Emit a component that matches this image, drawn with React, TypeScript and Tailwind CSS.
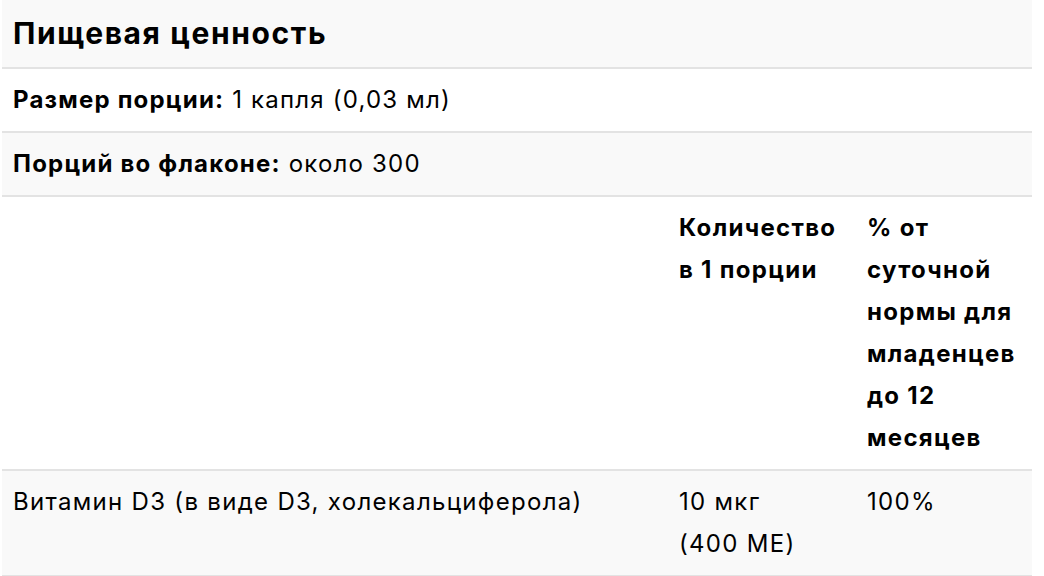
import React from 'react';

const rows = [
    { label: 'Размер порции:', value: '1 капля (0,03 мл)' },
    { label: 'Порций во флаконе:', value: 'около 300' },
];

const App: React.FC = () => {
    return (
        <main className="min-h-screen bg-white text-black font-['Inter',sans-serif]">
            <div className="ml-[2px] w-[1030px]">
                {/* Title */}
                <div className="bg-[#f9f9f9] border-b-2 border-[#e3e3e3] px-[11px] py-[10px]">
                    <h2 className="text-[30px] leading-[47px] font-bold tracking-[1.6px]">Пищевая ценность</h2>
                </div>

                {/* Serving info */}
                {rows.map((row, i) => (
                    <div
                        key={row.label}
                        className={`border-b-2 border-[#e3e3e3] px-[11px] py-[10px] text-[24px] leading-[42px] tracking-[1.2px] ${i % 2 === 1 ? 'bg-[#f9f9f9]' : 'bg-white'}`}
                    >
                        <span className="font-bold">{row.label}</span> {row.value}
                    </div>
                ))}

                {/* Nutrients table */}
                <table className="w-full border-collapse text-[24px] leading-[42px] tracking-[1.3px]">
                    <colgroup>
                        <col className="w-[666px]" />
                        <col className="w-[188px]" />
                        <col className="w-[176px]" />
                    </colgroup>
                    <thead>
                        <tr className="border-b-2 border-[#e3e3e3] bg-white">
                            <th className="px-[11px] py-[10px]"></th>
                            <th className="px-[11px] py-[10px] text-left align-top font-bold">Количество в 1 порции</th>
                            <th className="px-[11px] py-[10px] text-left align-top font-bold">% от суточной нормы для младенцев до 12 месяцев</th>
                        </tr>
                    </thead>
                    <tbody>
                        <tr className="border-b-2 border-[#e3e3e3] bg-[#f9f9f9]">
                            <td className="px-[11px] py-[10px] align-top">Витамин D3 (в виде D3, холекальциферола)</td>
                            <td className="px-[11px] py-[10px] align-top">10 мкг (400&nbsp;МЕ)</td>
                            <td className="px-[11px] py-[10px] align-top">100%</td>
                        </tr>
                    </tbody>
                </table>
            </div>
        </main>
    );
};

export default App;
